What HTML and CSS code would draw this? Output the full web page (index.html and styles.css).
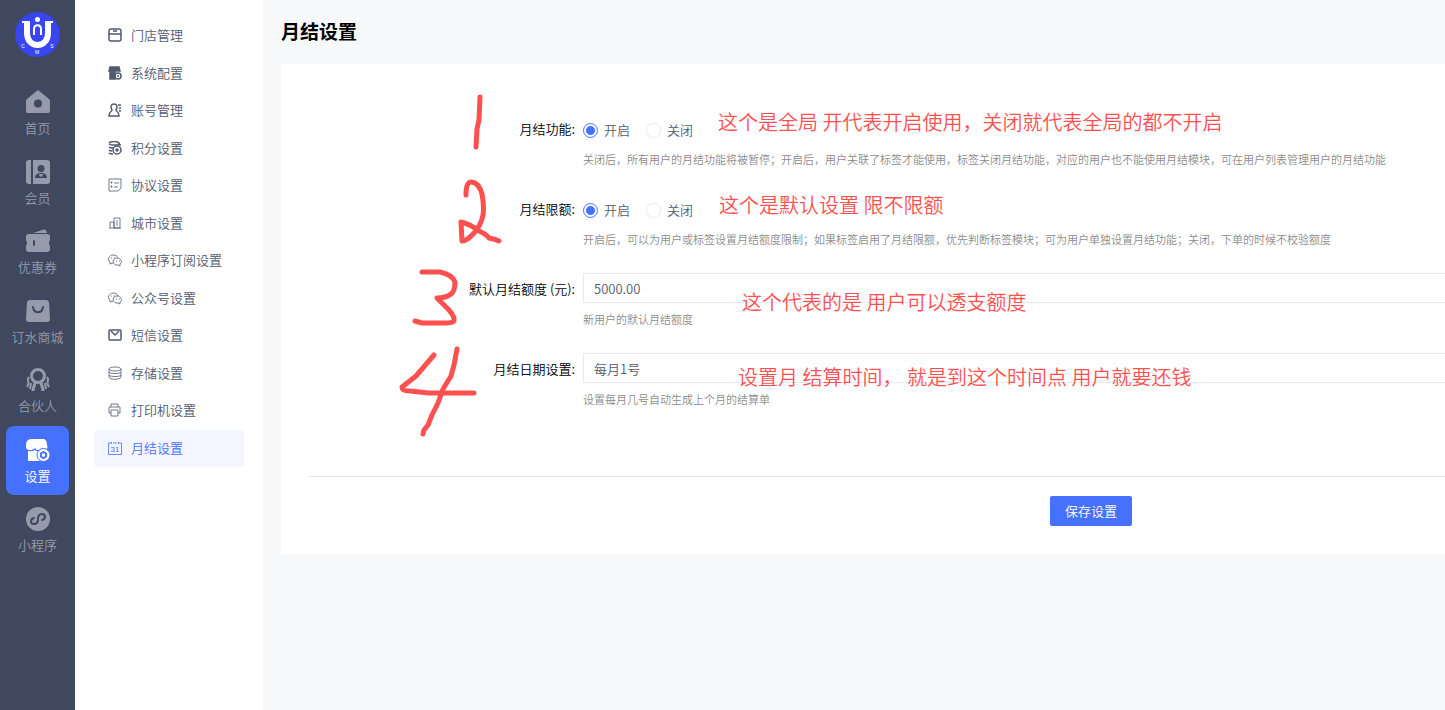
FILE: index.html
```html
<!DOCTYPE html>
<html lang="zh-CN">
  <head>
    <meta charset="UTF-8" />
    <meta name="viewport" content="width=device-width, initial-scale=1.0" />
    <title>月结设置</title>
    <link rel="stylesheet" href="styles.css">
  </head>
  <body>
    <aside class="sidebar">
      <svg class="logo" viewBox="0 0 45 45">
        <circle cx="22.500" cy="22.500" r="22.500" fill="#3a45f2" />
        <path d="M7 10h8M30 10h8" stroke="#fff" stroke-width="2" />
        <path d="M12 10v11c0 16 21 16 21 0V10" fill="none" stroke="#fff" stroke-width="6" />
        <circle cx="22.500" cy="7.500" r="2.500" fill="#fff" />
        <path d="M19 23v-6c0-5 7-5 7 0v6" fill="none" stroke="#fff" stroke-width="2" />
        <g fill="#fff" font-family="Liberation Sans" font-size="5" text-anchor="middle">
          <text x="8" y="36">C</text>
          <text x="22" y="42">M</text>
          <text x="37" y="36">S</text>
        </g>
      </svg>
      <nav class="main-nav">
        <a href="#">
          <svg viewBox="0 0 24 24"><path fill="currentColor" fill-rule="evenodd" d="M12 0 23 9q1 1 1 2v10q0 2-2 2H2q-2 0-2-2V11q0-1 1-2zM12 9.500a4 4 0 1 0 0 8 4 4 0 0 0 0-8z" /></svg>
          首页
        </a>
        <a href="#">
          <svg viewBox="0 0 24 24">
            <path fill="currentColor" d="M3 0h2v24H3q-3 0-3-3V3q0-3 3-3zM7 0h14q3 0 3 3v18q0 3-3 3H7z" />
            <circle cx="15" cy="8.500" r="3.500" fill="#3f485e" />
            <path fill="#3f485e" d="M9 18c0-7 12-7 12 0z" />
            <path fill="currentColor" d="m15 17-2-2c0-2 2-1 2 0 0-1 2-2 2 0z" />
          </svg>
          会员
        </a>
        <a href="#">
          <svg viewBox="0 0 24 24">
            <path fill="currentColor" d="M7 4 18 .5q2-.5 3 3.500zM3 5h18q3 0 3 3v3q-2 3 0 6v3q0 3-3 3H3q-3 0-3-3v-3q2-3 0-6V8q0-3 3-3z" />
            <path stroke="#3f485e" stroke-width="2" stroke-linecap="round" d="M8 12v4" />
          </svg>
          优惠券
        </a>
        <a href="#">
          <svg viewBox="0 0 24 24">
            <path fill="currentColor" d="M4 1h16q2 0 3 2l1 17q0 3-3 3H3q-3 0-3-3L1 3q1-2 3-2z" />
            <path fill="none" stroke="#3f485e" stroke-width="2" stroke-linecap="round" d="M7 8c1 7 9 7 10 0" />
          </svg>
          订水商城
        </a>
        <a href="#">
          <svg viewBox="0 0 24 24" fill="none" stroke="currentColor" stroke-width="3">
            <circle cx="12" cy="8" r="6.500" />
            <path d="M9 13c1 4-2 4-2 10M15 13c-1 4 2 4 2 10" />
            <path d="M3 9c-3 3 1 5-1 8l-1 2M21 9c3 3-1 5 1 8l1 2M5 15l-1 6M19 15l1 6" stroke-width="2" />
          </svg>
          合伙人
        </a>
        <a href="#" class="active">
          <svg viewBox="0 0 24 24">
            <path fill="#fff" d="M4 1h14q3 1 3 6c2 5-3 6-5 3-2 3-5 3-7 0-3 4-11 2-9-3 0-3 1-5 4-6zM2 13q4 1 7-1 3 3 7 1v10H2z" />
            <circle cx="17.500" cy="17" r="6.500" fill="#fff" stroke="#4671ff" />
            <path d="m17.500 14 2.600 1.500v3l-2.600 1.500-2.600-1.500v-3z" fill="none" stroke="#4671ff" stroke-width="2" />
          </svg>
          设置
        </a>
        <a href="#">
          <svg viewBox="0 0 24 24">
            <circle cx="12" cy="12" r="12" fill="currentColor" />
            <path fill="none" stroke="#3f485e" stroke-width="2" stroke-linecap="round" d="M8 11c-4 1-4 6 0 6 3 0 4-2 4-5s1-5 4-5c4 0 4 5 0 6" />
          </svg>
          小程序
        </a>
      </nav>
    </aside>

    <nav class="sub-nav">
      <ul>
        <li><a href="#"><svg viewBox="0 0 14 14"><path d="M3 1h8q2 0 2 2v8q0 2-2 2H3q-2 0-2-2V3q0-2 2-2zM1 6h12M5 3h4" /></svg>门店管理</a></li>
        <li><a href="#"><svg viewBox="0 0 14 14"><path class="solid" d="M2 1h9l1 4H1zM2 6h5v7H2z" /><circle cx="10" cy="10" r="3" /><path d="M10 9v2" /></svg>系统配置</a></li>
        <li><a href="#"><svg viewBox="0 0 14 14"><path d="M4 7c-2-3-1-6 2-6s4 3 2 6c0 2 3 1 3 6H1c0-5 3-4 3-6zM10 2h3M11 5h2M11 8h2" /></svg>账号管理</a></li>
        <li><a href="#"><svg viewBox="0 0 14 14"><path d="M1 2c2-2 8-2 10 0s-7 3-10 1M1 6c1 1 3 1 4 1M1 9c1 1 2 1 3 1M1 12c1 1 2 1 4 1M12 3v2" /><circle cx="9" cy="9" r="4" /><circle cx="9" cy="9" r="1" /></svg>积分设置</a></li>
        <li><a href="#"><svg viewBox="0 0 14 14" class="thin"><path d="M1 1h12v9l-3 3H1zM6 5h5M6 9h4" /><path class="solid" d="M3 4h1v1H3zM3 8h1v1H3z" /></svg>协议设置</a></li>
        <li><a href="#"><svg viewBox="0 0 14 14" class="thin"><path d="M2 12V6h4v6M6 12V2h6v10zM1 12h12M8 5h2M8 7h2M8 9h2" /></svg>城市设置</a></li>
        <li><a href="#"><svg viewBox="0 0 14 14" class="thin"><path d="M5 10 2 11V9C-1 7 1 2 5 2c3 0 4 1 5 3" /><path d="M9 5c-5 0-5 6-1 7h2l2 1v-2c3-2 1-6-3-6zM3 5h1M6 5h1M8 8h1M11 8h1" /></svg>小程序订阅设置</a></li>
        <li><a href="#"><svg viewBox="0 0 14 14" class="thin"><path d="M5 10 2 11V9C-1 7 1 2 5 2c3 0 4 1 5 3" /><path d="M9 5c-5 0-5 6-1 7h2l2 1v-2c3-2 1-6-3-6zM3 5h1M6 5h1M8 8h1M11 8h1" /></svg>公众号设置</a></li>
        <li><a href="#"><svg viewBox="0 0 14 14"><rect x="1" y="2" width="12" height="10" rx="1" /><path d="m3 3 4 4 4-4" /></svg>短信设置</a></li>
        <li><a href="#"><svg viewBox="0 0 14 14" class="thin"><ellipse cx="7" cy="3" rx="6" ry="2" /><path d="M1 3v8c0 3 12 3 12 0V3M1 6c0 2 12 2 12 0M1 9c0 2 12 2 12 0" /></svg>存储设置</a></li>
        <li><a href="#"><svg viewBox="0 0 14 14" class="thin"><path d="M3 4V1h7v3M3 10H1V4h11v6h-2M3 7h7v6H3z" /></svg>打印机设置</a></li>
        <li><a href="#" class="active"><svg viewBox="0 0 14 14" class="thin"><path d="M3 2H.5v11.500h13V2H11M5 2h1M8 2h1M3.500 1v2M7 1v2M10.500 1v2" /><text x="7" y="11" font-family="Liberation Sans" font-size="8" font-weight="400" text-anchor="middle" fill="currentColor" stroke="none">31</text></svg>月结设置</a></li>
      </ul>
    </nav>

    <main class="content">
      <h1>月结设置</h1>
      <form class="card">
        <div class="form-row" role="radiogroup" aria-labelledby="feature-label">
          <span class="form-label" id="feature-label">月结功能:</span>
          <div class="field">
            <div class="radios">
              <label><input type="radio" name="feature" checked />开启</label>
              <label><input type="radio" name="feature" />关闭</label>
            </div>
            <p class="help">关闭后，所有用户的月结功能将被暂停；开启后，用户关联了标签才能使用，标签关闭月结功能，对应的用户也不能使用月结模块，可在用户列表管理用户的月结功能</p>
          </div>
        </div>
        <div class="form-row" role="radiogroup" aria-labelledby="limit-label">
          <span class="form-label" id="limit-label">月结限额:</span>
          <div class="field">
            <div class="radios">
              <label><input type="radio" name="limit" checked />开启</label>
              <label><input type="radio" name="limit" />关闭</label>
            </div>
            <p class="help">开启后，可以为用户或标签设置月结额度限制；如果标签启用了月结限额，优先判断标签模块；可为用户单独设置月结功能；关闭，下单的时候不校验额度</p>
          </div>
        </div>
        <div class="form-row">
          <label class="form-label" for="amount">默认月结额度 (元):</label>
          <div class="field">
            <input class="control" type="text" id="amount" value="5000.00" />
            <p class="help">新用户的默认月结额度</p>
          </div>
        </div>
        <div class="form-row">
          <label class="form-label" for="day">月结日期设置:</label>
          <div class="field">
            <select class="control" id="day">
              <option>每月1号</option>
            </select>
            <p class="help">设置每月几号自动生成上个月的结算单</p>
          </div>
        </div>
        <div class="form-footer">
          <button type="button" class="save-btn">保存设置</button>
        </div>

        <!-- handwritten notes over the form -->
        <svg class="marks" viewBox="390 80 120 370">
          <path d="M480 97l-1 23-2 9-1 18" />
          <path d="M466 195q0-14 6-13 7 1 10 12 3 17 0 25-3 9-8 14-7 8-12 8l-1-19q11 3 18 9 7 3 10 7 6 1 10 3" />
          <path d="M422 272h18q13 3 15 10 0 9-4 12-5 4-14 4l12 12q6 7 5 11-2 2-8 2h-24l-7-2" />
          <path d="M434 355l-18 21-14 11q0 4 8 4l19 2h45M457 349l-3 16-3 11-8 13-5 14-6 12-4 10-4 5-1 4" />
        </svg>
        <span class="note note-1">这个是全局 开代表开启使用，关闭就代表全局的都不开启</span>
        <span class="note note-2">这个是默认设置 限不限额</span>
        <span class="note note-3">这个代表的是 用户可以透支额度</span>
        <span class="note note-4">设置月 结算时间， 就是到这个时间点 用户就要还钱</span>
      </form>
    </main>
  </body>
</html>
```
FILE: styles.css
```css
* {
  box-sizing: border-box;
}
body {
  margin: 0;
  min-height: 100vh;
  display: flex;
  font-family: "Noto Sans CJK SC", sans-serif;
  font-size: 13px;
  font-weight: 350;
  color: #515a6e;
  background: #f6f8fa;
}
a {
  color: inherit;
  text-decoration: none;
}
.sidebar {
  flex: none;
  width: 75px;
  padding: 12px 6px;
  background: #3f485e;
}
.logo {
  display: block;
  width: 45px;
  height: 45px;
  margin: 0 auto 21px;
}
.main-nav a {
  display: flex;
  flex-direction: column;
  align-items: center;
  gap: 4px;
  height: 69px;
  padding-top: 12px;
  border-radius: 8px;
  line-height: 20px;
  color: #959bab;
}
.main-nav a:nth-child(odd) {
  margin-bottom: 1px;
}
.main-nav svg {
  width: 24px;
  height: 24px;
}
.main-nav .active {
  background: #4671ff;
  color: #fff;
}
.sub-nav {
  flex: none;
  width: 188px;
  padding: 17px 19px;
  background: #fff;
}
.sub-nav ul {
  list-style: none;
  margin: 0;
  padding: 0;
}
.sub-nav li:nth-child(odd) {
  margin-bottom: 1px;
}
.sub-nav a {
  display: flex;
  align-items: center;
  gap: 9px;
  height: 37px;
  padding: 0 0 2px 14px;
  border-radius: 4px;
}
.sub-nav svg {
  width: 14px;
  height: 14px;
  fill: none;
  stroke: currentColor;
  stroke-width: 1.5;
}
.sub-nav .thin {
  stroke-width: 0.8;
}
.sub-nav .solid {
  fill: currentColor;
}
.sub-nav .active {
  background: #f3f6ff;
  color: #4671ff;
}
.content {
  flex: 1;
  min-width: 0;
  padding: 16px 0 16px 18px;
}
h1 {
  margin: 0 0 18px;
  font-size: 19px;
  line-height: 30px;
  font-weight: 700;
  color: #000;
}
.card {
  position: relative;
  padding: 49px 0 28px 28px;
  background: #fff;
}
.form-row {
  display: flex;
  gap: 8px;
  min-height: 80px;
}
.form-label {
  flex: none;
  width: 266px;
  line-height: 32px;
  text-align: right;
  color: #000;
}
.field {
  flex: 1;
  min-width: 0;
}
.radios {
  display: flex;
  gap: 16px;
  height: 32px;
  margin-bottom: 2px;
}
.radios label {
  display: flex;
  align-items: center;
  gap: 6px;
}
.radios input {
  appearance: none;
  width: 15px;
  height: 15px;
  margin: 3px 0 0;
  border: 1px solid #e8eaf3;
  border-radius: 50%;
}
.radios input:checked {
  border-color: #4671ff;
  background: radial-gradient(circle, #4671ff 4px, #fff 5px);
}
.control {
  appearance: none;
  display: block;
  width: 100%;
  height: 30px;
  margin-bottom: 4px;
  padding: 0 10px;
  border: 1px solid #e8eaf3;
  border-right: 0;
  border-radius: 2px 0 0 2px;
  background: #fff;
  color: #515a6e;
  font: inherit;
}
.help {
  margin: 0;
  font-size: 11px;
  line-height: 24px;
  color: #8c8c8c;
}
.form-footer {
  margin-top: 43px;
  padding: 19px 0 0 741px;
  border-top: 1px solid #e5e5e5;
}
.save-btn {
  display: block;
  height: 30px;
  padding: 0 15px 2px;
  border: 0;
  border-radius: 2px;
  background: #4671ff;
  color: #fff;
  font: inherit;
}
.marks {
  position: absolute;
  left: 109px;
  top: 16px;
  width: 120px;
  height: 370px;
  fill: none;
  stroke: #ff5050;
  stroke-width: 5;
  stroke-linecap: round;
  stroke-linejoin: round;
  pointer-events: none;
}
.note {
  position: absolute;
  font-size: 20px;
  line-height: 28px;
  white-space: nowrap;
  color: #ff5050;
  pointer-events: none;
}
.note-1 {
  left: 437px;
  top: 44px;
}
.note-2 {
  left: 438px;
  top: 127px;
}
.note-3 {
  left: 461px;
  top: 224px;
}
.note-4 {
  left: 457px;
  top: 299px;
}
```
